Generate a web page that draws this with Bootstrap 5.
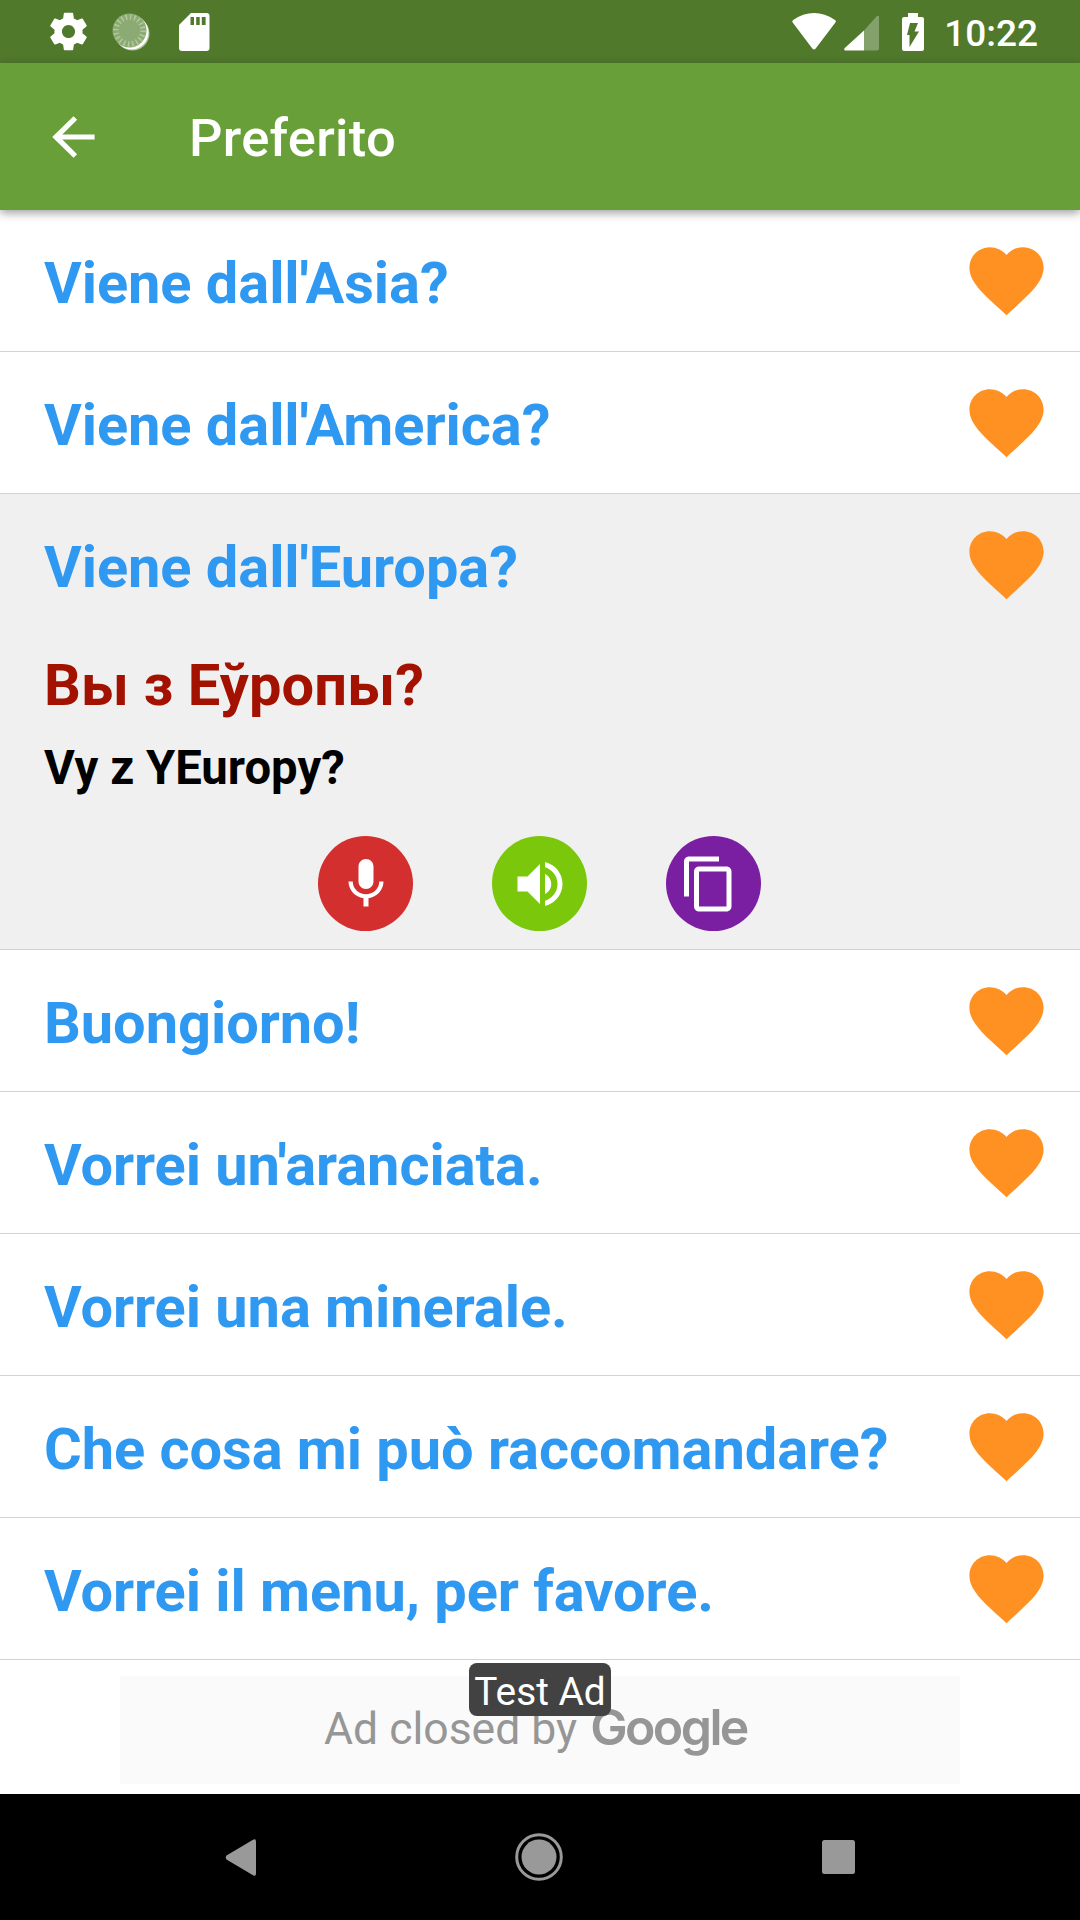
<!DOCTYPE html>
<html lang="it">
<head>
<meta charset="utf-8">
<meta name="viewport" content="width=device-width, initial-scale=1">
<title>Preferito</title>
<link href="https://cdn.jsdelivr.net/npm/bootstrap@5.3.0/dist/css/bootstrap.min.css" rel="stylesheet">
<style>
  body { font-family: Roboto, "Noto Sans", sans-serif; width: 1080px; height: 1920px; overflow: hidden; line-height: 1; }
  svg { display: block; flex: none; }
  .status-bar { height: 63px; background: #50792c; padding: 0 42px 0 46px; }
  .status-time { font-size: 37px; font-weight: 500; line-height: 63px; margin-left: 20px; padding-top: 3px; }
  .sync-icon { margin-left: 20px; }
  .card-icon { margin-left: 28px; }
  .signal-icon { margin: 2px 0 0 8px; }
  .battery-icon { margin-left: 22px; }
  .app-bar { height: 147px; background: #689f38; padding: 0 47px; box-shadow: 0 3px 9px rgba(0,0,0,.38); z-index: 2; }
  .app-title { font-size: 52.5px; font-weight: 500; margin-left: 90px; padding-top: 4px; letter-spacing: .3px; }
  .phrases .list-group-item { padding: 0 29px 0 44px; border-width: 0 0 1px; border-color: #d3d3d3; background: #fff; }
  .phrases.list-group-flush > .list-group-item:last-child { border-bottom-width: 1px; }
  .phrases .list-group-item.opened { background: #f0f0f0; height: 456px; }
  .phrase-head { height: 141px; }
  .phrase-text { font-size: 57.75px; font-weight: 700; color: #2f98f0; white-space: nowrap; padding-top: 7px; letter-spacing: -.05px; }
  .translated { font-size: 57.75px; font-weight: 700; color: #a31200; line-height: 68px; margin-top: 16px; letter-spacing: .15px; }
  .spoken { font-size: 47.25px; font-weight: 700; color: #000; line-height: 56px; margin-top: 21px; }
  .actions { gap: 79px; margin-top: 40px; padding-right: 17px; }
  .round-btn { width: 95px; height: 95px; }
  .round-btn svg { margin-left: 1px; }
  .bg-mic { background: #d32f2f; } .bg-sound { background: #7bc70c; } .bg-copy { background: #7b1fa2; padding-right: 9px !important; }
  .ad-zone { height: 134px; padding-top: 16px; }
  .ad-box { width: 840px; height: 108px; background: #fafafa; color: #969696; padding-left: 204px; }
  .ad-label { font-size: 44.5px; line-height: 106px; white-space: nowrap; }
  .ad-brand { font-family: Inter, sans-serif; font-weight: 600; font-size: 50px; line-height: 102px; margin-left: 13px; letter-spacing: -2.6px; }
  .test-tag { left: 469px; top: 3px; width: 142px; height: 53px; border-radius: 8px; background: #424242; font-size: 38.8px; padding-top: 5px; }
  .nav-keys { height: 126px; background: #000; padding: 0 225px; }
</style>
</head>
<body class="bg-white d-flex flex-column">
<svg width="0" height="0" class="position-absolute">
  <symbol id="heart" viewBox="0 0 24 24"><path fill="#ff9122" d="M12 21.35l-1.45-1.32C5.4 15.36 2 12.28 2 8.5 2 5.42 4.42 3 7.5 3c1.74 0 3.41.81 4.5 2.09C13.09 3.81 14.76 3 16.5 3 19.58 3 22 5.42 22 8.5c0 3.78-3.4 6.86-8.55 11.54L12 21.35z"/></symbol>
</svg>

<div class="status-bar d-flex align-items-center text-white">
  <svg width="45" height="45" viewBox="0 0 24 24" fill="#fff"><path d="M19.43 12.98c.04-.32.07-.64.07-.98s-.03-.66-.07-.98l2.11-1.65c.19-.15.24-.42.12-.64l-2-3.46c-.12-.22-.39-.3-.61-.22l-2.49 1c-.52-.4-1.08-.73-1.69-.98l-.38-2.65C14.46 2.18 14.25 2 14 2h-4c-.25 0-.46.18-.49.42l-.38 2.65c-.61.25-1.17.59-1.69.98l-2.49-1c-.23-.09-.49 0-.61.22l-2 3.46c-.13.22-.07.49.12.64l2.11 1.65c-.04.32-.07.65-.07.98s.03.66.07.98l-2.11 1.65c-.19.15-.24.42-.12.64l2 3.46c.12.22.39.3.61.22l2.49-1c.52.4 1.08.73 1.69.98l.38 2.65c.03.24.24.42.49.42h4c.25 0 .46-.18.49-.42l.38-2.65c.61-.25 1.17-.59 1.69-.98l2.49 1c.23.09.49 0 .61-.22l2-3.46c.12-.22.07-.49-.12-.64l-2.11-1.65zM12 15.5c-1.93 0-3.5-1.57-3.5-3.5s1.57-3.5 3.5-3.5 3.5 1.57 3.5 3.5-1.57 3.5-3.5 3.5z"/></svg>
  <svg class="sync-icon" width="40" height="40" viewBox="0 0 40 40">
    <circle cx="21.500" cy="21.500" r="17" fill="#a9c293"/><circle cx="20.500" cy="20.500" r="17" fill="#fff"/><circle cx="18.500" cy="18.500" r="17" fill="#8caa74"/>
    <circle cx="18.500" cy="18.500" r="13.500" fill="none" stroke="#b3c99c" stroke-width="5.500" stroke-dasharray="1.500 2.740"/>
  </svg>
  <svg class="card-icon" width="31" height="38" viewBox="0 0 31 38"><path fill="#fff" d="M12 0H27.500a3 3 0 0 1 3 3V35a3 3 0 0 1-3 3H3a3 3 0 0 1-3-3V12z"/><path fill="#50792c" d="M11.500 4h3.500v8h-3.500zM17.200 4h3.500v8h-3.500zM22.800 4h3.800v8h-3.800z"/></svg>
  <svg class="ms-auto" width="44" height="37" viewBox="0 0 44 37"><path fill="#fff" d="M.7 9.500Q-.3 8 1.200 7Q11 0 22 0T43 7Q44.500 8 43.400 9.500L23.700 35.500Q22 37.500 20.300 35.500z"/></svg>
  <svg class="signal-icon" width="36" height="36" viewBox="0 0 36 36"><path fill="#85a16b" d="M20 15.500L33 1Q35 0 35 2V33.500Q35 35.500 33 35.500H20z"/><path fill="#fff" d="M20 15.500V35.500H1.500Q-.8 35 .8 33z"/></svg>
  <svg class="battery-icon" width="22" height="38" viewBox="0 0 22 38"><path fill="#fff" d="M6 0H16V4H20Q22 4 22 6V36Q22 38 20 38H2Q0 38 0 36V6Q0 4 2 4H6z"/><path fill="#50792c" d="M8 10h8l-3.500 8.500H17L7.500 34V22H5z"/></svg>
  <span class="status-time">10:22</span>
</div>

<header class="app-bar d-flex align-items-center text-white position-relative">
  <svg width="52" height="52" viewBox="0 0 20 20" fill="#fff"><path d="M18.300 9v2H5.900l5.700 5.600-1.400 1.400L2 10l8.200-8 1.400 1.400L5.900 9z"/></svg>
  <span class="app-title">Preferito</span>
</header>

<main class="list-group list-group-flush rounded-0 phrases">
  <div class="list-group-item"><div class="phrase-head d-flex align-items-center justify-content-between"><span class="phrase-text">Viene dall'Asia?</span><svg width="89" height="89"><use href="#heart"/></svg></div></div>
  <div class="list-group-item"><div class="phrase-head d-flex align-items-center justify-content-between"><span class="phrase-text">Viene dall'America?</span><svg width="89" height="89"><use href="#heart"/></svg></div></div>
  <div class="list-group-item opened">
    <div class="phrase-head d-flex align-items-center justify-content-between"><span class="phrase-text">Viene dall'Europa?</span><svg width="89" height="89"><use href="#heart"/></svg></div>
    <div class="translated">Вы з Еўропы?</div>
    <div class="spoken">Vy z YEuropy?</div>
    <div class="actions d-flex justify-content-center">
      <button class="round-btn bg-mic btn border-0 rounded-circle p-0 d-flex align-items-center justify-content-center" aria-label="Microfono"><svg width="60" height="60" viewBox="0 0 24 24" fill="#fff"><path d="M12 14c1.660 0 2.990-1.340 2.990-3L15 5c0-1.660-1.340-3-3-3S9 3.340 9 5v6c0 1.660 1.340 3 3 3zm5.300-3c0 3-2.540 5.100-5.300 5.100S6.700 14 6.700 11H5c0 3.410 2.720 6.230 6 6.720V21h2v-3.280c3.280-.48 6-3.300 6-6.720h-1.700z"/></svg></button>
      <button class="round-btn bg-sound btn border-0 rounded-circle p-0 d-flex align-items-center justify-content-center" aria-label="Ascolta"><svg width="60" height="60" viewBox="0 0 24 24" fill="#fff"><path d="M3 9v6h4l5 5V4L7 9H3zm13.500 3c0-1.770-1.020-3.290-2.500-4.030v8.050c1.480-.73 2.500-2.250 2.500-4.020zM14 3.230v2.060c2.890.86 5 3.540 5 6.710s-2.110 5.850-5 6.710v2.060c4.010-.91 7-4.490 7-8.770s-2.990-7.860-7-8.770z"/></svg></button>
      <button class="round-btn bg-copy btn border-0 rounded-circle p-0 d-flex align-items-center justify-content-center" aria-label="Copia"><svg width="60" height="60" viewBox="0 0 24 24" fill="#fff"><path d="M16 1H4c-1.100 0-2 .9-2 2v14h2V3h12V1zm3 4H8c-1.100 0-2 .9-2 2v14c0 1.100.9 2 2 2h11c1.100 0 2-.9 2-2V7c0-1.100-.9-2-2-2zm0 16H8V7h11v14z"/></svg></button>
    </div>
  </div>
  <div class="list-group-item"><div class="phrase-head d-flex align-items-center justify-content-between"><span class="phrase-text">Buongiorno!</span><svg width="89" height="89"><use href="#heart"/></svg></div></div>
  <div class="list-group-item"><div class="phrase-head d-flex align-items-center justify-content-between"><span class="phrase-text">Vorrei un'aranciata.</span><svg width="89" height="89"><use href="#heart"/></svg></div></div>
  <div class="list-group-item"><div class="phrase-head d-flex align-items-center justify-content-between"><span class="phrase-text">Vorrei una minerale.</span><svg width="89" height="89"><use href="#heart"/></svg></div></div>
  <div class="list-group-item"><div class="phrase-head d-flex align-items-center justify-content-between"><span class="phrase-text">Che cosa mi può raccomandare?</span><svg width="89" height="89"><use href="#heart"/></svg></div></div>
  <div class="list-group-item"><div class="phrase-head d-flex align-items-center justify-content-between"><span class="phrase-text">Vorrei il menu, per favore.</span><svg width="89" height="89"><use href="#heart"/></svg></div></div>
</main>

<section class="ad-zone position-relative">
  <div class="ad-box mx-auto d-flex"><span class="ad-label">Ad closed by</span><span class="ad-brand">Google</span></div>
  <div class="test-tag position-absolute text-white d-flex align-items-center justify-content-center">Test Ad</div>
</section>

<nav class="nav-keys d-flex align-items-center justify-content-between">
  <svg width="31" height="37" viewBox="0 0 31 37"><path fill="#999" d="M28 .8Q31 -.8 31 2.500V34.500Q31 37.800 28 36.200L1.500 20.500Q0 18.500 1.500 16.500z"/></svg>
  <svg width="48" height="48" viewBox="0 0 48 48"><circle cx="24" cy="24" r="22.300" fill="none" stroke="#999" stroke-width="3"/><circle cx="24" cy="24" r="17.500" fill="#999"/></svg>
  <svg width="33" height="34" viewBox="0 0 33 34"><rect width="33" height="34" rx="2.500" fill="#999"/></svg>
</nav>
<script src="https://cdn.jsdelivr.net/npm/bootstrap@5.3.0/dist/js/bootstrap.bundle.min.js"></script>
</body>
</html>
